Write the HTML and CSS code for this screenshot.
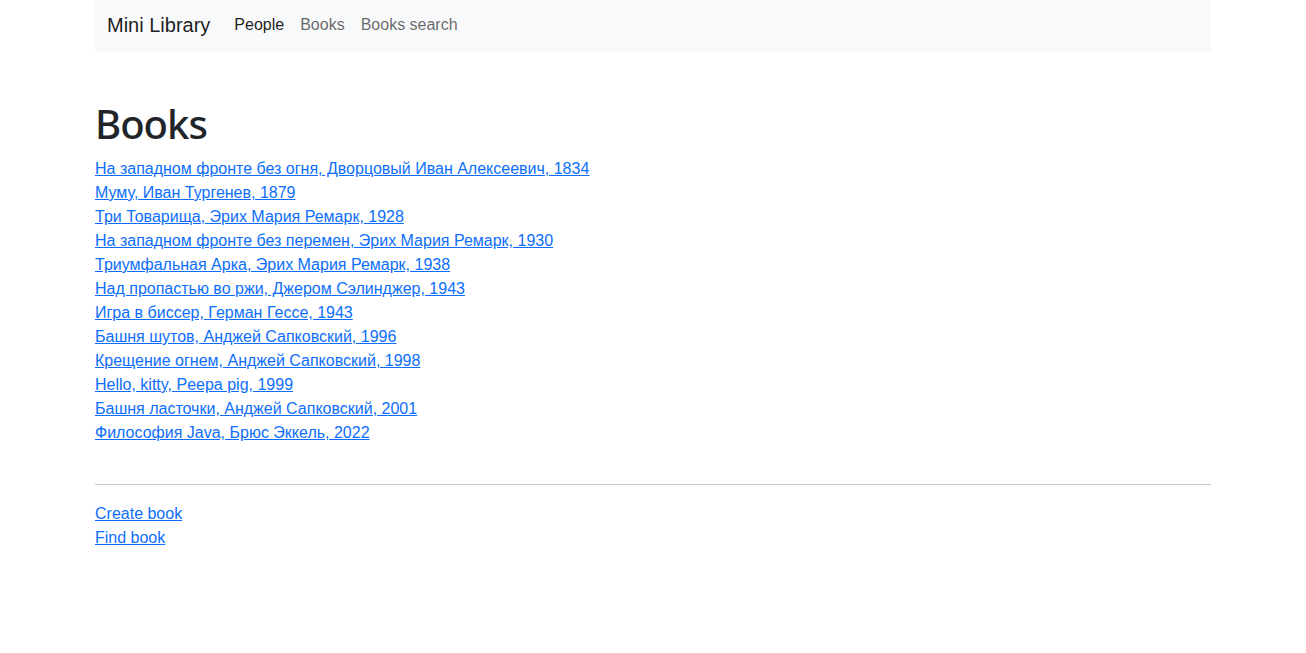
FILE: index.html
```html
<!DOCTYPE html>
<html lang="ru">
<head>
<meta charset="utf-8">
<title>Books</title>
<link rel="stylesheet" href="styles.css">
</head>
<body>
<div class="container">
  <nav class="navbar">
    <a class="brand" href="#">Mini Library</a>
    <ul class="nav">
      <li><a class="nav-link active" href="#">People</a></li>
      <li><a class="nav-link" href="#">Books</a></li>
      <li><a class="nav-link" href="#">Books search</a></li>
    </ul>
  </nav>
  <main class="content">
    <h1 class="title">Books</h1>
    <div class="book-list">
      <div><a href="#">На западном фронте без огня, Дворцовый Иван Алексеевич, 1834</a></div>
      <div><a href="#">Муму, Иван Тургенев, 1879</a></div>
      <div><a href="#">Три Товарища, Эрих Мария Ремарк, 1928</a></div>
      <div><a href="#">На западном фронте без перемен, Эрих Мария Ремарк, 1930</a></div>
      <div><a href="#">Триумфальная Арка, Эрих Мария Ремарк, 1938</a></div>
      <div><a href="#">Над пропастью во ржи, Джером Сэлинджер, 1943</a></div>
      <div><a href="#">Игра в биссер, Герман Гессе, 1943</a></div>
      <div><a href="#">Башня шутов, Анджей Сапковский, 1996</a></div>
      <div><a href="#">Крещение огнем, Анджей Сапковский, 1998</a></div>
      <div><a href="#">Hello, kitty, Peepa pig, 1999</a></div>
      <div><a href="#">Башня ласточки, Анджей Сапковский, 2001</a></div>
      <div><a href="#">Философия Java, Брюс Эккель, 2022</a></div>
    </div>
    <hr class="divider">
    <div class="actions">
      <div><a href="#">Create book</a></div>
      <div><a href="#">Find book</a></div>
    </div>
  </main>
</div>
</body>
</html>
```
FILE: styles.css
```css
* { box-sizing: border-box; }
html, body { margin: 0; padding: 0; }
body {
  font-family: "Liberation Sans", Arial, sans-serif;
  font-size: 16px;
  line-height: 24px;
  color: #212529;
  background: #fff;
}
.container {
  max-width: 1140px;
  margin: 0 auto;
  padding: 0 12px;
}
.navbar {
  display: flex;
  align-items: center;
  background: #f8f9fa;
  height: 52px;
  padding: 0 12px;
}
.brand {
  font-size: 20px;
  line-height: 30px;
  color: rgba(0,0,0,.9);
  text-decoration: none;
  margin-right: 16px;
  padding-bottom: 2px;
}
.nav {
  display: flex;
  list-style: none;
  margin: 0;
  padding: 0;
  margin-top: -2px;
}
.nav-link {
  display: block;
  padding: 0 8px;
  color: rgba(0,0,0,.6);
  text-decoration: none;
}
.nav-link.active { color: rgba(0,0,0,.9); }
.content { padding-top: 48px; }
.title {
  font-family: "Noto Sans", "Liberation Sans", sans-serif;
  font-size: 40px;
  font-weight: 500;
  line-height: 48px;
  margin: 0 0 8px;
  letter-spacing: -1px;
}
.book-list > div, .actions > div { padding-top: 1px; margin-bottom: -1px; }
.book-list a, .actions a { color: #0d6efd; text-decoration: underline; }
.divider {
  border: 0;
  border-top: 1px solid #212529;
  opacity: .25;
  margin: 40px 0 16px;
}
```
